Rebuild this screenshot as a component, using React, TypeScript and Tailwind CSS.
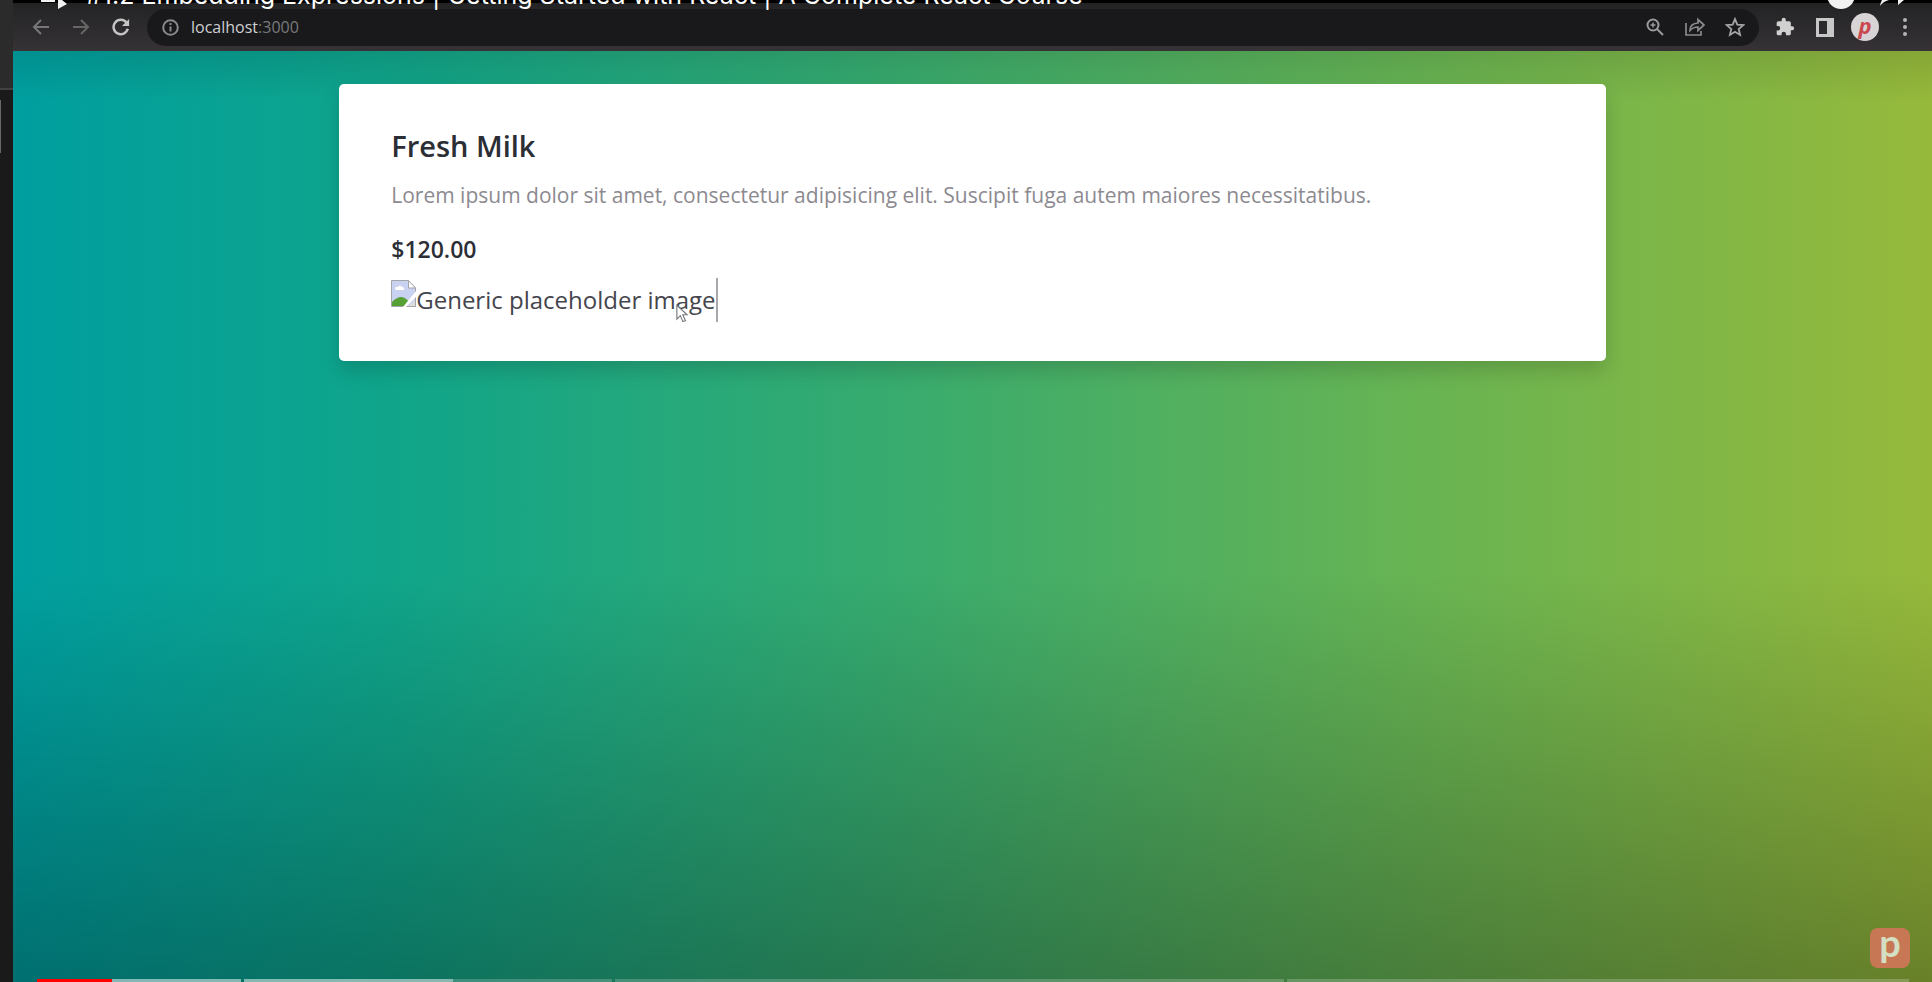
import React from "react";

const FONT = "font-['Open_Sans','Noto_Sans',sans-serif]";

function ToolButton({ label, children }: { label: string; children: React.ReactNode }) {
  return (
    <button type="button" aria-label={label} className="flex size-7 shrink-0 items-center justify-center">
      {children}
    </button>
  );
}

function VideoTitle() {
  return (
    <div className="absolute inset-x-0 top-0 h-[10px] text-white">
      <svg className="absolute left-[40px] top-0" width="28" height="9" viewBox="0 0 28 9" fill="#f1f1f1">
        <path d="M1 0h14v2H1zM18 0h4l5 4-9 5z" />
      </svg>
      <h1 className="absolute bottom-0 left-[86px] whitespace-nowrap font-['Inter',sans-serif] text-[25px] leading-[30px]">
        #1.2 Embedding Expressions | Getting Started with React | A Complete React Course
      </h1>
      <svg className="absolute right-[76px] top-0" width="30" height="10" viewBox="0 0 30 10" fill="#f1f1f1">
        <circle cx="15" cy="-5" r="14" />
      </svg>
      <svg className="absolute right-[26px] top-0" width="28" height="7" viewBox="0 0 28 7" fill="#f1f1f1">
        <path d="M2 6Q2.500 2.500 4 0H11Q5 1.500 2 6zM20 0h6l-6 5z" />
      </svg>
    </div>
  );
}

function BrowserBar() {
  return (
    <header className="flex h-[51px] items-center gap-3 border-t-[3px] border-black bg-gradient-to-b from-[#232324] to-[#363236] pl-[14px] pr-[13px]">
      <ToolButton label="Back">
        <svg width="18" height="18" viewBox="0 0 18 18" fill="none" stroke="#777" strokeWidth="2"><path d="M17 9H2M9 2L2 9l7 7" /></svg>
      </ToolButton>
      <ToolButton label="Forward">
        <svg width="18" height="18" viewBox="0 0 18 18" fill="none" stroke="#666" strokeWidth="2"><path d="M1 9h15M9 2l7 7-7 7" /></svg>
      </ToolButton>
      <ToolButton label="Reload">
        <svg width="18" height="18" viewBox="0 0 20 20"><path d="M16 5A8 8 0 1 0 17.500 12" fill="none" stroke="#c4c4c4" strokeWidth="2.800" /><path d="M19 1v8h-8z" fill="#c4c4c4" /></svg>
      </ToolButton>
      <div className="flex h-[37px] min-w-0 flex-1 items-center gap-3 rounded-full bg-[#19191c] pl-[15px] pr-[10px]">
        <svg width="17" height="17" viewBox="0 0 17 17" fill="none" stroke="#8b8b8b" strokeWidth="2"><circle cx="8.500" cy="8.500" r="7.300" /><path d="M8.500 7.500v5M8.500 4v2" /></svg>
        <div className={`flex min-w-0 flex-1 text-[16px] leading-6 ${FONT}`}>
          <span className="text-[#d0d0d0]">localhost</span><span className="text-[#7a7a7a]">:3000</span>
        </div>
        <ToolButton label="Zoom">
          <svg width="18" height="18" viewBox="0 0 18 18" fill="none" stroke="#9a9a9a" strokeWidth="2"><circle cx="7" cy="7" r="5.500" /><path d="M11 11l6 6" /><path d="M4.500 7h5M7 4.500v5" strokeWidth="1.500" /></svg>
        </ToolButton>
        <ToolButton label="Share">
          <svg width="20" height="20" viewBox="0 0 20 20" fill="none" stroke="#8b8b8b" strokeWidth="1.700"><path d="M1 6v12h15v-4M5 13.500q0-7 8-7.500V2.500l6 5.500-6 5.500V10q-5 0-8 3.500z" /></svg>
        </ToolButton>
        <ToolButton label="Bookmark">
          <svg width="20" height="20" viewBox="0 0 20 20" fill="none" stroke="#a5a5a5" strokeWidth="1.800"><path d="M10 2l2.300 5.600 6 .5-4.600 3.900 1.400 5.900L10 14.700l-5.100 3.200L6.300 12 1.700 8.100l6-.5z" /></svg>
        </ToolButton>
      </div>
      <ToolButton label="Extensions">
        <svg width="20" height="20" viewBox="0 0 24 24" fill="#d0d0d0"><path d="M20.500 11H19V7a2 2 0 0 0-2-2h-4V3.500a2.500 2.500 0 0 0-5 0V5H4a2 2 0 0 0-2 2v3.800h1.500a2.700 2.700 0 0 1 0 5.400H2V20a2 2 0 0 0 2 2h3.800v-1.500a2.700 2.700 0 0 1 5.400 0V22H17a2 2 0 0 0 2-2v-4h1.500a2.500 2.500 0 0 0 0-5z" /></svg>
      </ToolButton>
      <ToolButton label="Side panel">
        <svg width="18" height="19" viewBox="0 0 18 19"><path d="M0 0h18v19H0zM3 3v13h8V3z" fill="#c7c7c7" fillRule="evenodd" /></svg>
      </ToolButton>
      <ToolButton label="Profile">
        <span className="flex size-7 items-center justify-center rounded-full bg-[#d8d4d6] pb-[5px] font-['Open_Sans',sans-serif] text-[22px] font-bold italic leading-6 text-[#c9474f]">p</span>
      </ToolButton>
      <ToolButton label="Menu">
        <svg width="4" height="18" viewBox="0 0 4 18" fill="#b4b4b4"><circle cx="2" cy="2" r="2" /><circle cx="2" cy="9" r="2" /><circle cx="2" cy="16" r="2" /></svg>
      </ToolButton>
    </header>
  );
}

function BrokenImage() {
  return (
    <svg className="mt-[2px] shrink-0" width="25" height="27" viewBox="0 0 25 27">
      <path d="M.5.500h17L24.500 8v18.500H.5z" fill="#c9d2f0" stroke="#a4a4aa" />
      <path d="M17.500.500V8h7z" fill="#fff" stroke="#a4a4aa" />
      <path d="M4 9q0-3 3-2 2-3 4 0 3 0 2 3H5z" fill="#fff" />
      <path d="M1 26V22q5-5 9-5t8 5l-4 4z" fill="#56a036" />
      <path d="M25 11v6L15 27h-3z" fill="#fff" /><path d="M17 26.500h7.500V20" fill="#ddd" stroke="#a4a4aa" />
    </svg>
  );
}

function ProductCard() {
  return (
    <article className={`mx-auto mt-[33px] flex w-[66%] flex-col items-start rounded-[5px] bg-white px-[52px] pb-[39px] pt-[42px] text-[#2c2e35] shadow-[0_10px_20px_rgba(0,0,0,0.15)] ${FONT}`}>
      <h2 className="text-[29px] font-semibold leading-[40px]">Fresh Milk</h2>
      <p className="mt-3 text-[21px] leading-[34px] text-[#8c8a90]">
        Lorem ipsum dolor sit amet, consectetur adipisicing elit. Suscipit fuga autem maiores necessitatibus.
      </p>
      <p className="mt-5 text-[23px] font-semibold leading-[34px]">$120.00</p>
      <div className="relative mt-3 flex border-r-2 border-[#a9a7ac]">
        <BrokenImage />
        <span className="text-[24px] leading-[44px] text-[#45454d]">Generic placeholder image</span>
        <svg className="absolute bottom-[-1px] right-7" width="12" height="19" viewBox="0 0 14 21" fill="#fff" stroke="#77777c" strokeWidth="1.300"><path d="M1 1v16l4-4 3 7 3-1-3-7h5z" /></svg>
      </div>
    </article>
  );
}

function Progress() {
  return (
    <div className="absolute bottom-0 left-[37px] right-[23px] flex h-[3px] gap-[3px]">
      <div className="flex w-[204px]"><div className="w-[75px] bg-[#f00]" /><div className="flex-1 bg-white/50" /></div>
      <div className="flex w-[368px]"><div className="w-[209px] bg-white/50" /><div className="flex-1 bg-white/20" /></div>
      <div className="w-[669px] bg-white/20" />
      <div className="flex-1 bg-white/20" />
    </div>
  );
}

export default function App() {
  return (
    <div className="relative flex min-h-screen overflow-hidden bg-[#1a1a1a]">
      <aside className="w-[13px] shrink-0">
        <div className="h-[90px] border-b-2 border-[#414141] bg-[#2b2b2b]" />
        <div className="mt-[10px] h-[53px] w-px bg-[#686868]" />
      </aside>
      <div className="flex min-w-0 flex-1 flex-col">
        <BrowserBar />
        <main className="flex-1 bg-[linear-gradient(to_bottom,rgba(0,0,0,0.1)_0,transparent_50px,transparent_56%,rgba(0,0,0,0.3)_100%),linear-gradient(to_right,#009fa0,#10a58a_20%,#36ab6f_45%,#69b452_74%,#96b93b)]">
          <ProductCard />
        </main>
      </div>
      <VideoTitle />
      <div role="img" aria-label="Channel logo" className="absolute bottom-[14px] right-[22px] flex size-10 items-center justify-center rounded-lg bg-[#c77754] pb-3 font-['Lato',sans-serif] text-[38px] font-bold leading-10 text-[#d4dec2]">p</div>
      <Progress />
    </div>
  );
}
